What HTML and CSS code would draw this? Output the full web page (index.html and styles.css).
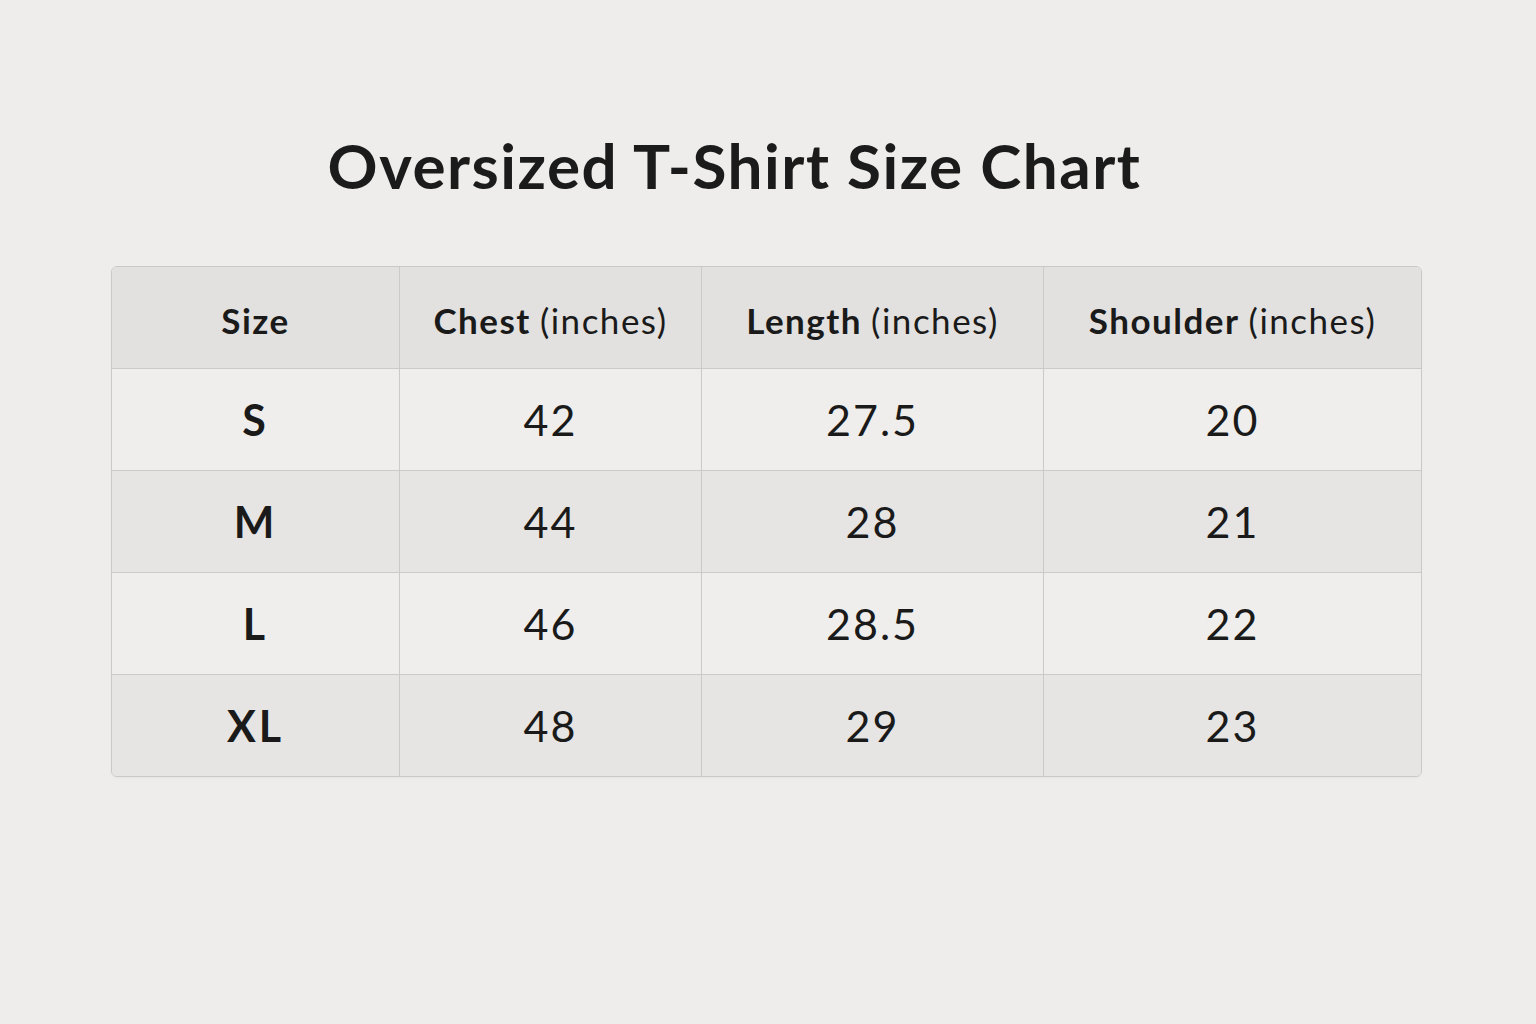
FILE: index.html
```html
<!DOCTYPE html>
<html lang="en">
<head>
<meta charset="utf-8">
<title>Oversized T-Shirt Size Chart</title>
<link rel="stylesheet" href="styles.css">
</head>
<body>
<main class="page">
  <h1 class="title">Oversized T-Shirt Size Chart</h1>
  <div class="chart">
    <div class="row head">
      <div class="cell">Size</div>
      <div class="cell">Chest <span class="unit">(inches)</span></div>
      <div class="cell">Length <span class="unit">(inches)</span></div>
      <div class="cell">Shoulder <span class="unit">(inches)</span></div>
    </div>
    <div class="row odd">
      <div class="cell size">S</div>
      <div class="cell">42</div>
      <div class="cell">27.5</div>
      <div class="cell">20</div>
    </div>
    <div class="row even">
      <div class="cell size">M</div>
      <div class="cell">44</div>
      <div class="cell">28</div>
      <div class="cell">21</div>
    </div>
    <div class="row odd">
      <div class="cell size">L</div>
      <div class="cell">46</div>
      <div class="cell">28.5</div>
      <div class="cell">22</div>
    </div>
    <div class="row even last">
      <div class="cell size">XL</div>
      <div class="cell">48</div>
      <div class="cell">29</div>
      <div class="cell">23</div>
    </div>
  </div>
</main>
</body>
</html>
```
FILE: styles.css
```css
html, body {
  margin: 0;
  padding: 0;
  background: #efedeb;
}
body {
  font-family: "Lato", "Open Sans", sans-serif;
  color: #1a1a1a;
  width: 1536px;
  height: 1024px;
  overflow: hidden;
}
.page {
  padding: 130px 115px 0 112px;
  display: flex;
  flex-direction: column;
  align-items: center;
}
.title {
  margin: 0 64px 0 0;
  font-size: 62px;
  line-height: 70px;
  font-weight: 700;
  letter-spacing: 1.5px;
  color: #1b1b1b;
}
.chart {
  margin-top: 66px;
  width: 1309px;
  border: 1px solid #cac9c7;
  border-radius: 6px;
  overflow: hidden;
  box-shadow: 0 1px 2px rgba(0,0,0,0.04);
}
.row {
  display: grid;
  grid-template-columns: 287px 302px 342px 1fr;
  height: 102px;
  box-sizing: border-box;
  border-top: 1px solid #cbcac8;
}
.row.head {
  border-top: none;
  height: 101px;
  background: #e2e1df;
}
.row.odd { background: #efeeec; }
.row.even { background: #e6e5e3; }
.cell {
  display: flex;
  align-items: center;
  justify-content: center;
  border-left: 1px solid #cbcac8;
  font-size: 43px;
  font-weight: 400;
  letter-spacing: 2px;
}
.cell:first-child { border-left: none; }
.head .cell {
  font-size: 35px;
  font-weight: 700;
  letter-spacing: 1.5px;
  padding-top: 4px;
}
.head .unit { font-weight: 400; margin-left: 9px; }
.cell.size { font-weight: 700; letter-spacing: 3px; }
```
